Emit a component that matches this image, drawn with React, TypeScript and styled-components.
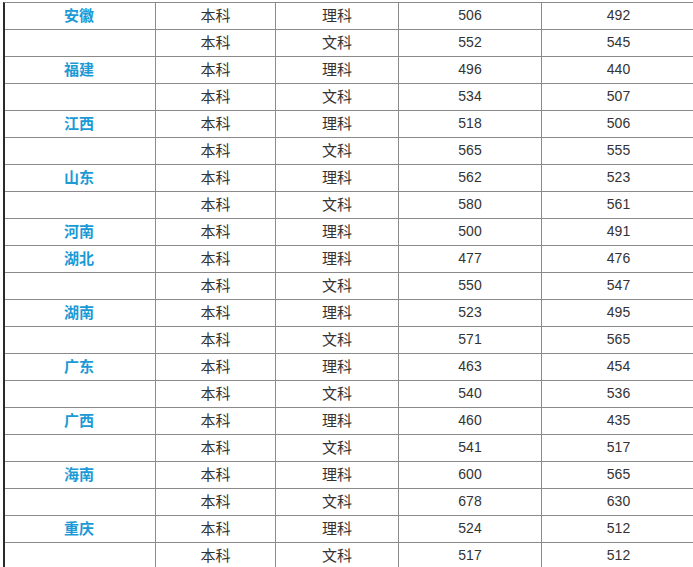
import React from "react";
import styled, { createGlobalStyle } from "styled-components";

const Global = createGlobalStyle`
  html, body { margin: 0; padding: 0; background: #fff; }
  body { font-family: "Liberation Sans", "Noto Sans CJK SC", sans-serif; overflow: hidden; }
`;

const Table = styled.div`
  margin: 2px 0 0 3px;
  width: 692px;
  border-top: 1px solid #8a8a8a;
  border-left: 2px solid #2a2a2a;
`;

const Row = styled.div`
  display: grid;
  grid-template-columns: 151px 120px 123px 143px 154px;
  height: 27px;
  box-sizing: border-box;
  border-bottom: 1px solid #8a8a8a;
`;

const Cell = styled.div<{ $kind?: "prov" | "zh" | "num" }>`
  display: flex;
  align-items: center;
  justify-content: center;
  box-sizing: border-box;
  line-height: 1;
  padding-bottom: ${(p) => (p.$kind === "num" ? "2px" : "3px")};
  border-right: 1px solid #8a8a8a;
  margin-left: ${(p) => (p.$kind === "prov" ? "-2px" : "0")};
  font-size: ${(p) => (p.$kind === "num" ? "14px" : "15px")};
  font-weight: ${(p) => (p.$kind === "prov" ? 700 : 400)};
  color: ${(p) => (p.$kind === "prov" ? "#1b9ad6" : "#333")};
  font-family: ${(p) =>
    p.$kind === "num"
      ? '"Liberation Sans", sans-serif'
      : '"Noto Sans CJK SC", sans-serif'};
`;

type R = [string, string, string, string];
const data: R[] = [
  ["安徽", "理科", "506", "492"],
  ["", "文科", "552", "545"],
  ["福建", "理科", "496", "440"],
  ["", "文科", "534", "507"],
  ["江西", "理科", "518", "506"],
  ["", "文科", "565", "555"],
  ["山东", "理科", "562", "523"],
  ["", "文科", "580", "561"],
  ["河南", "理科", "500", "491"],
  ["湖北", "理科", "477", "476"],
  ["", "文科", "550", "547"],
  ["湖南", "理科", "523", "495"],
  ["", "文科", "571", "565"],
  ["广东", "理科", "463", "454"],
  ["", "文科", "540", "536"],
  ["广西", "理科", "460", "435"],
  ["", "文科", "541", "517"],
  ["海南", "理科", "600", "565"],
  ["", "文科", "678", "630"],
  ["重庆", "理科", "524", "512"],
  ["", "文科", "517", "512"],
];

export default function App() {
  return (
    <>
      <Global />
      <Table>
        {data.map((r, i) => (
          <Row key={i}>
            <Cell $kind="prov">{r[0]}</Cell>
            <Cell $kind="zh">本科</Cell>
            <Cell $kind="zh">{r[1]}</Cell>
            <Cell $kind="num">{r[2]}</Cell>
            <Cell $kind="num">{r[3]}</Cell>
          </Row>
        ))}
      </Table>
    </>
  );
}
